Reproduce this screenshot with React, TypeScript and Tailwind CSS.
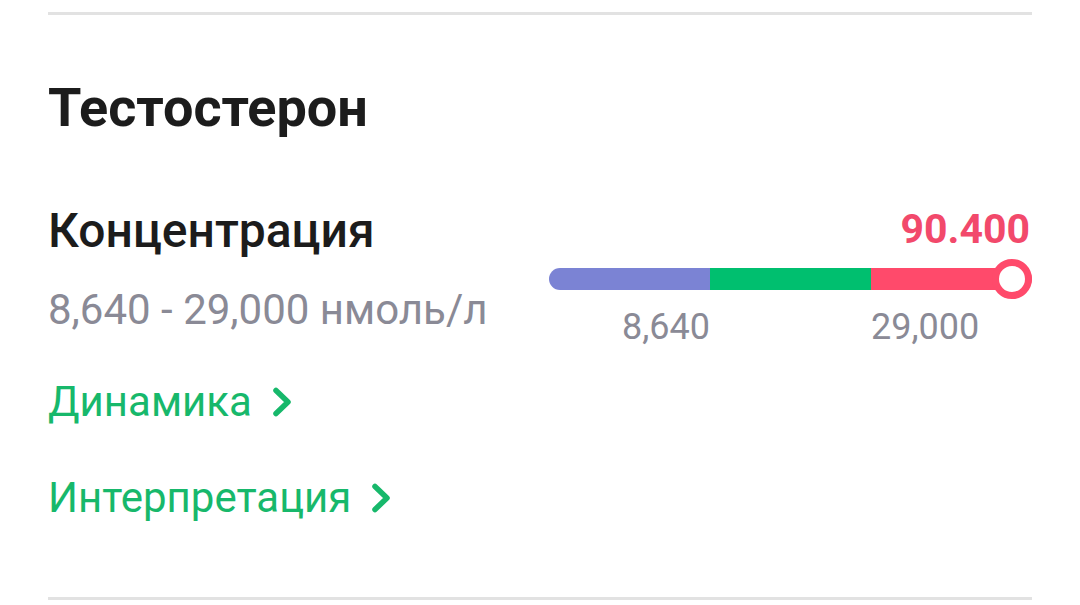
import React from "react";

function Chevron() {
  return (
    <svg width="22" height="32" viewBox="0 0 22 32" className="shrink-0">
      <path
        d="M5 4.5 L17 16 L5 27.5"
        fill="none"
        stroke="currentColor"
        strokeWidth="5.5"
        strokeLinecap="round"
        strokeLinejoin="round"
      />
    </svg>
  );
}

function LinkRow({ label }: { label: string }) {
  return (
    <div className="flex items-center gap-[19px] text-[42px] leading-[48px] text-[#17b86b]">
      <span>{label}</span>
      <Chevron />
    </div>
  );
}

function RangeBar() {
  return (
    <div className="w-[483px] flex flex-col items-stretch">
      <div className="text-right text-[41px] leading-[48px] font-bold text-[#f2496b] pr-[2px]">
        90.400
      </div>
      <div className="relative mt-[15px] h-[22px] flex">
        <div className="flex-1 bg-[#7b83d4] rounded-l-full" />
        <div className="flex-1 bg-[#00bf6f]" />
        <div className="flex-1 bg-[#ff4a6b] rounded-r-full" />
        <div className="absolute right-0 top-1/2 -translate-y-1/2 w-[40px] h-[40px] rounded-full border-[7px] border-[#ff4a6b] bg-white" />
      </div>
      <div className="flex mt-[17px] text-[36px] leading-[40px] text-[#8a8a96]">
        <div className="flex-1 text-right">8,640</div>
        <div className="flex-1" />
        <div className="flex-1 text-left">29,000</div>
      </div>
    </div>
  );
}

export default function App() {
  return (
    <div
      className="w-[1080px] h-[605px] bg-white px-[48px] overflow-hidden flex flex-col"
      style={{ fontFamily: "Roboto, 'Noto Sans', sans-serif" }}
    >
      <div className="mt-[12px] h-[3px] bg-[#e2e2e2]" />
      <h1 className="mt-[61px] text-[54px] leading-[64px] font-bold text-[#1c1c1c]">
        Тестостерон
      </h1>
      <div className="mt-[63px] flex justify-between">
        <div className="flex flex-col">
          <div className="text-[48px] leading-[56px] font-medium text-[#1c1c1c]">
            Концентрация
          </div>
          <div className="mt-[27px] text-[42px] leading-[48px] text-[#8a8a96]">
            8,640 - 29,000 нмоль/л
          </div>
          <div className="mt-[44px]">
            <LinkRow label="Динамика" />
          </div>
          <div className="mt-[48px]">
            <LinkRow label="Интерпретация" />
          </div>
        </div>
        <div className="pt-[2px]">
          <RangeBar />
        </div>
      </div>
      <div className="mt-auto mb-[5px] h-[3px] bg-[#e2e2e2]" />
    </div>
  );
}
